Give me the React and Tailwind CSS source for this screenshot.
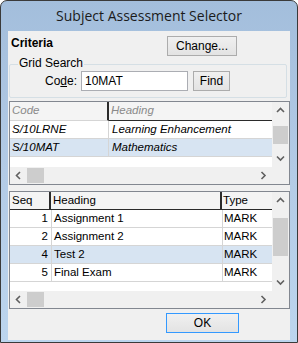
import React from 'react'

const FONT = { fontFamily: 'Tahoma, "Liberation Sans", Arial, sans-serif' }

function Chevron({ dir }) {
  const paths = {
    up: 'M1 5 L4.5 1.5 L8 5',
    down: 'M1 1.5 L4.5 5 L8 1.5',
    left: 'M5 1 L1.5 4.5 L5 8',
    right: 'M1.5 1 L5 4.5 L1.5 8',
  }
  const vertical = dir === 'up' || dir === 'down'
  return (
    <svg width={vertical ? 9 : 7} height={vertical ? 7 : 9} viewBox={vertical ? '0 0 9 7' : '0 0 7 9'}>
      <path d={paths[dir]} fill="none" stroke="#606060" strokeWidth="1.6" />
    </svg>
  )
}

function VScroll({ thumbTop, thumbH }) {
  return (
    <div className="w-[17px] bg-[#f0f0f0] flex flex-col items-center justify-between relative">
      <div className="h-[17px] flex items-center justify-center"><Chevron dir="up" /></div>
      <div className="absolute left-[1px] w-[15px] bg-[#cdcdcd]" style={{ top: thumbTop, height: thumbH }} />
      <div className="h-[17px] flex items-center justify-center"><Chevron dir="down" /></div>
    </div>
  )
}

function HScroll() {
  return (
    <div className="h-[17px] flex bg-[#f0f0f0]">
      <div className="w-[17px] flex items-center justify-center"><Chevron dir="left" /></div>
      <div className="w-[17px] my-[1px] bg-[#cdcdcd]" />
      <div className="flex-1" />
      <div className="w-[17px] flex items-center justify-center"><Chevron dir="right" /></div>
      <div className="w-[17px]" />
    </div>
  )
}

function Button({ children, focused, className = '' }) {
  return (
    <div
      className={`flex items-center justify-center text-[12px] text-black bg-gradient-to-b from-[#f0f0f0] to-[#e3e3e3] border ${focused ? 'border-[#3399ff]' : 'border-[#acacac]'} ${className}`}
    >
      {children}
    </div>
  )
}

export default function App() {
  const subjects = [
    { code: 'S/10LRNE', heading: 'Learning Enhancement' },
    { code: 'S/10MAT', heading: 'Mathematics', sel: true },
  ]
  const items = [
    { seq: 1, heading: 'Assignment 1', type: 'MARK' },
    { seq: 2, heading: 'Assignment 2', type: 'MARK' },
    { seq: 4, heading: 'Test 2', type: 'MARK', sel: true },
    { seq: 5, heading: 'Final Exam', type: 'MARK' },
  ]

  return (
    <div style={FONT} className="w-[298px] h-[343px] border border-[#3a3a3a] rounded-t-[7px] bg-gradient-to-b from-[#a3bedc] via-[#b3cbe6] to-[#bcd5ee] flex flex-col overflow-hidden">
      {/* title bar */}
      <div className="h-[30px] flex items-center justify-center text-[14px] text-[#1b1b1b] pb-[1px]" style={{ fontFamily: '"Segoe UI", "Open Sans", "Liberation Sans", sans-serif' }}>
        Subject Assessment Selector
      </div>

      {/* client */}
      <div className="mx-[7px] h-[309px] bg-[#f0f0f0] flex flex-col pl-[1px] pr-[1px] text-[12px] text-black">
        {/* criteria row */}
        <div className="flex items-start h-[27px] pt-[5px]">
          <span className="w-[158px] font-bold text-[12px] pl-[2px] leading-[15px]">Criteria</span>
          <Button className="w-[70px] h-[20px]">Change...</Button>
        </div>

        {/* group box */}
        <div className="relative mt-[6px] mr-[2px] h-[34px] border border-[#d5dfe5] rounded-[2px]">
          <span className="absolute -top-[9px] left-[8px] px-[1px] bg-[#f0f0f0] leading-[15px]">Grid Search</span>
          <div className="flex items-center mt-[6px]">
            <span className="ml-[35px] w-[36px]">Co<u>d</u>e:</span>
            <div className="w-[107px] h-[20px] bg-white border border-[#abadb3] flex items-center pl-[3px]">10MAT</div>
            <Button className="ml-[5px] w-[37px] h-[20px]">Find</Button>
          </div>
        </div>

        {/* subjects grid */}
        <div className="mt-[3px] h-[84px] w-[281px] border border-[#828790] bg-white flex flex-col">
          <div className="flex flex-1">
            <div className="flex-1 flex flex-col italic text-[11.5px]">
              <div className="flex h-[19px] bg-[#f4f4f4] text-[#8a8a8a]">
                <div className="w-[99px] pl-[2px] flex items-center border-b border-[#d5d5d5] border-r-2 border-r-[#2b2b2b]">Code</div>
                <div className="flex-1 pl-[2px] flex items-center border-b border-[#2b2b2b]">Heading</div>
              </div>
              {subjects.map(s => (
                <div key={s.code} className={`flex h-[18px] ${s.sel ? 'bg-[#d7e4f2]' : 'bg-white'}`}>
                  <div className="w-[99px] pl-[2px] flex items-center border-b border-r border-[#d5d5d5]">{s.code}</div>
                  <div className="flex-1 pl-[3px] flex items-center border-b border-[#d5d5d5]">{s.heading}</div>
                </div>
              ))}
            </div>
            <VScroll thumbTop={24} thumbH={18} />
          </div>
          <HScroll />
        </div>

        {/* items grid */}
        <div className="mt-[6px] h-[118px] w-[281px] border border-[#828790] bg-white flex flex-col">
          <div className="flex flex-1">
            <div className="flex-1 flex flex-col text-[11.5px]">
              <div className="flex h-[18px] bg-[#f4f4f4] border-b border-[#2b2b2b]">
                <div className="w-[41px] pl-[2px] flex items-center border-r-2 border-[#2b2b2b]">Seq</div>
                <div className="w-[171px] pl-[2px] flex items-center border-r-2 border-[#2b2b2b]">Heading</div>
                <div className="flex-1 pl-[1px] flex items-center">Type</div>
              </div>
              {items.map(r => (
                <div key={r.seq} className={`flex h-[18px] ${r.sel ? 'bg-[#d7e4f2]' : 'bg-white'}`}>
                  <div className="w-[42px] pr-[3px] flex items-center justify-end border-b border-r border-[#d5d5d5]">{r.seq}</div>
                  <div className="w-[171px] pl-[2px] flex items-center border-b border-r border-[#d5d5d5]">{r.heading}</div>
                  <div className="flex-1 pl-[1px] flex items-center border-b border-[#d5d5d5]">{r.type}</div>
                </div>
              ))}
            </div>
            <VScroll thumbTop={26} thumbH={38} />
          </div>
          <HScroll />
        </div>

        {/* ok */}
        <div className="flex mt-[4px]">
          <Button focused className="ml-[157px] w-[73px] h-[20px]">OK</Button>
        </div>
      </div>
    </div>
  )
}
